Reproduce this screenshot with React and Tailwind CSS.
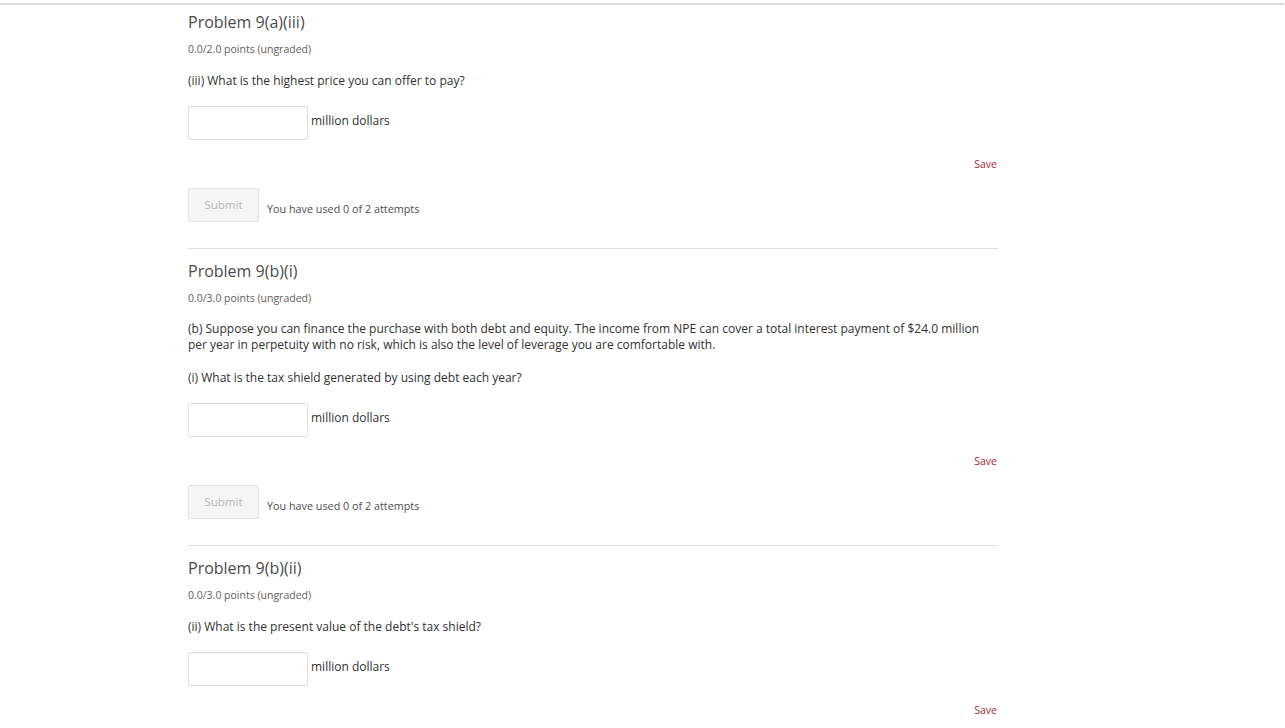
import React from "react";

// ─── PROBLEM DATA ─────────────────────────────
const PROBLEMS = [
  {
    title: "Problem 9(a)(iii)",
    points: "0.0/2.0 points (ungraded)",
    intro: null,
    question: "(iii) What is the highest price you can offer to pay?",
    padTop: "pt-[7px]",
  },
  {
    title: "Problem 9(b)(i)",
    points: "0.0/3.0 points (ungraded)",
    intro:
      "(b) Suppose you can finance the purchase with both debt and equity. The income from NPE can cover a total interest payment of $24.0 million per year in perpetuity with no risk, which is also the level of leverage you are comfortable with.",
    question: "(i) What is the tax shield generated by using debt each year?",
    padTop: "pt-[12px]",
  },
  {
    title: "Problem 9(b)(ii)",
    points: "0.0/3.0 points (ungraded)",
    intro: null,
    question: "(ii) What is the present value of the debt's tax shield?",
    padTop: "pt-[12px]",
  },
];

function Problem({ p, last }) {
  return (
    <section className={`${p.padTop} ${last ? "" : "border-b border-[#dddddd]"}`}>
      {/* TITLE */}
      <h2 className="text-[16px] leading-[20px] text-[#4b4b4b]">{p.title}</h2>

      {/* POINTS */}
      <p className="mt-[9px] text-[10.5px] leading-[16px] text-[#5e5e5e]">{p.points}</p>

      {/* INTRO */}
      {p.intro && (
        <p className="mt-[15px] text-[12px] leading-[16px] text-[#313131] pr-[14px]">{p.intro}</p>
      )}

      {/* QUESTION */}
      <p
        className={`${p.intro ? "mt-[16px]" : "mt-[15px]"} text-[12px] leading-[18px] text-[#313131]`}
      >
        {p.question}
      </p>

      {/* ANSWER */}
      <div className="mt-[16px] flex items-center">
        <input
          type="text"
          className="w-[120px] h-[34px] bg-white border border-[#dedede] rounded-[2px] shadow-[inset_0_1px_1px_rgba(0,0,0,0.04)] outline-none"
        />
        <span className="ml-[3px] mb-[5px] text-[12px] text-[#313131]">million dollars</span>
      </div>

      {/* SAVE */}
      <div className="mt-[16px] flex justify-end pr-[1px]">
        <span className="text-[10.5px] leading-[16px] text-[#ad1f2d]">Save</span>
      </div>

      {/* SUBMIT */}
      {!last && (
        <div className="mt-[16px] mb-[26px] flex items-end">
          <button className="w-[71px] h-[34px] bg-[#f5f5f5] border border-[#e3e3e3] rounded-[2px] text-[11.5px] text-[#b5b5b5] pb-[1px]">
            Submit
          </button>
          <span className="ml-[8px] mb-[5px] text-[10.8px] leading-[16px] text-[#4e4e4e]">
            You have used 0 of 2 attempts
          </span>
        </div>
      )}
    </section>
  );
}

export default function App() {
  return (
    <div className="w-full min-h-[728px] bg-white overflow-hidden" style={{ fontFamily: '"Open Sans", "Noto Sans", sans-serif' }}>
      <div className="mt-[3px] h-[2px] bg-[#dcdcdc] w-[1284px]"></div>
      <main className="ml-[188px] w-[810px]">
        {PROBLEMS.map((p, i) => (
          <Problem key={p.title} p={p} last={i === PROBLEMS.length - 1} />
        ))}
      </main>
    </div>
  );
}
